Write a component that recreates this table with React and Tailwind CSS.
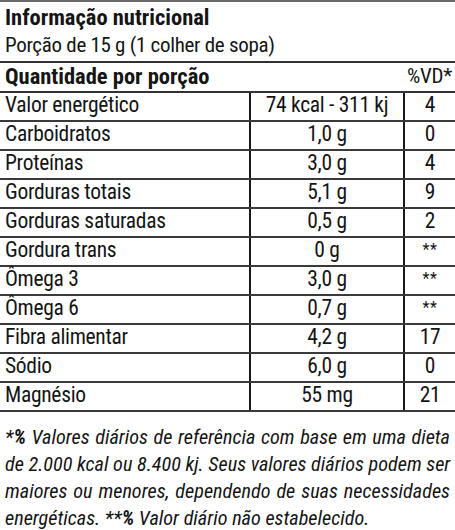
import React from "react";

const rows = [
  ["Valor energético", "74 kcal - 311 kj", "4"],
  ["Carboidratos", "1,0 g", "0"],
  ["Proteínas", "3,0 g", "4"],
  ["Gorduras totais", "5,1 g", "9"],
  ["Gorduras saturadas", "0,5 g", "2"],
  ["Gordura trans", "0 g", "**"],
  ["Ômega 3", "3,0 g", "**"],
  ["Ômega 6", "0,7 g", "**"],
  ["Fibra alimentar", "4,2 g", "17"],
  ["Sódio", "6,0 g", "0"],
  ["Magnésio", "55 mg", "21"],
];

export default function App() {
  return (
    <div className="w-[455px] h-[530px] overflow-hidden bg-white text-[#151515] font-['Roboto_Condensed',Roboto,sans-serif] font-stretch-condensed">
      <div className="border-t-2 border-[#6a6a6a]" />
      <div className="pt-[1px] pb-[2px] px-[5px] border-b-2 border-[#333]">
        <div className="h-[28px] leading-[28px] text-[22.5px] font-bold">Informação nutricional</div>
        <div className="h-[28px] leading-[28px] text-[21px] tracking-[-0.3px]">Porção de 15 g (1 colher de sopa)</div>
      </div>
      <div className="h-[30px] border-b-2 border-[#333] flex items-start justify-between pt-[1px] pl-[5px] pr-[3px]">
        <span className="leading-[24px] text-[22.5px] font-bold">Quantidade por porção</span>
        <span className="leading-[24px] text-[21px] tracking-[-0.3px]">%VD*</span>
      </div>
      {rows.map(([name, amount, vd]) => (
        <div
          key={name}
          className="grid grid-cols-[249px_154px_1fr] h-[29px] border-b-2 border-[#3a3a3a] text-[21.5px] leading-[21px] tracking-[-0.3px]"
        >
          <div className="pl-[5px] pt-[1px]">{name}</div>
          <div className="border-l-2 border-[#1a1a1a] text-center pt-[1px]">{amount}</div>
          <div className="border-l-2 border-[#1a1a1a] text-center pt-[1px]">
            {vd === "**" ? <span className="text-[16px] align-top tracking-[0.5px]">**</span> : vd}
          </div>
        </div>
      ))}
      <div className="mt-[12px] px-[5px] italic text-[20.2px] leading-[27px]">
        <div className="text-justify [text-align-last:justify] whitespace-nowrap">
          *<span className="font-bold">%</span> Valores diários de referência com base em uma dieta
        </div>
        <div className="text-justify [text-align-last:justify] whitespace-nowrap">
          de 2.000 kcal ou 8.400 kj. Seus valores diários podem ser
        </div>
        <div className="text-justify [text-align-last:justify] whitespace-nowrap">
          maiores ou menores, dependendo de suas necessidades
        </div>
        <div className="whitespace-nowrap">
          energéticas. **<span className="font-bold">%</span> Valor diário não estabelecido.
        </div>
      </div>
    </div>
  );
}
